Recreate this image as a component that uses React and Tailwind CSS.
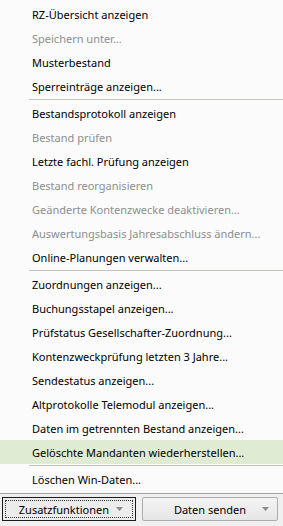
import React from "react";

const items = [
  { t: "RZ-Übersicht anzeigen" },
  { t: "Speichern unter...", d: true },
  { t: "Musterbestand" },
  { t: "Sperreinträge anzeigen..." },
  { sep: true },
  { t: "Bestandsprotokoll anzeigen" },
  { t: "Bestand prüfen", d: true },
  { t: "Letzte fachl. Prüfung anzeigen" },
  { t: "Bestand reorganisieren", d: true },
  { t: "Geänderte Kontenzwecke deaktivieren...", d: true },
  { t: "Auswertungsbasis Jahresabschluss ändern...", d: true },
  { t: "Online-Planungen verwalten..." },
  { sep: true },
  { t: "Zuordnungen anzeigen..." },
  { t: "Buchungsstapel anzeigen..." },
  { t: "Prüfstatus Gesellschafter-Zuordnung..." },
  { t: "Kontenzweckprüfung letzten 3 Jahre..." },
  { t: "Sendestatus anzeigen..." },
  { t: "Altprotokolle Telemodul anzeigen..." },
  { t: "Daten im getrennten Bestand anzeigen..." },
  { t: "Gelöschte Mandanten wiederherstellen...", h: true },
  { sep: true },
  { t: "Löschen Win-Daten..." },
];

function Arrow() {
  return (
    <svg width="7" height="4" viewBox="0 0 7 4" className="shrink-0">
      <path d="M0 0 H7 L3.5 4 Z" fill="#8a8a8a" />
    </svg>
  );
}

export default function App() {
  return (
    <div
      className="w-[283px] h-[526px] bg-[#f0f0f0] flex flex-col overflow-hidden text-[11px] leading-none"
      style={{ fontFamily: '"Noto Sans", "Open Sans", sans-serif' }}
    >
      <div className="bg-[#fbfbfb] flex flex-col pt-[2px] h-[493px]">
        {items.map((it, i) =>
          it.sep ? (
            <div key={i} className="h-[3px] flex items-center pl-[29px]">
              <div className="h-px w-full bg-[#c4c6be]" />
            </div>
          ) : (
            <div
              key={i}
              className={`h-[24px] flex items-center pl-[32px] whitespace-nowrap ${
                it.h ? "bg-[#e0ebd3]" : ""
              } ${it.d ? "text-[#8e8e8e]" : "text-[#000000]"}`}
            >
              {it.t}
            </div>
          )
        )}
      </div>
      <div className="border-t border-[#a0a0a0] flex-1 flex items-start pt-[3px] gap-[6px] px-[2px]">
        <div className="w-[134px] h-[24px] border border-[#1a1a1a] bg-[#ececec] p-[2px]">
          <div className="h-full border border-dotted border-[#333] flex items-center justify-end pr-[9px] gap-[7px] text-black">
            <span>Zusatzfunktionen</span>
            <Arrow />
          </div>
        </div>
        <div className="w-[136px] h-[24px] border border-[#acacac] rounded-[2px] bg-gradient-to-b from-[#f4f4f4] to-[#e6e6e6] flex items-center justify-end pr-[8px] gap-[16px] text-black">
          <span>Daten senden</span>
          <Arrow />
        </div>
      </div>
    </div>
  );
}
